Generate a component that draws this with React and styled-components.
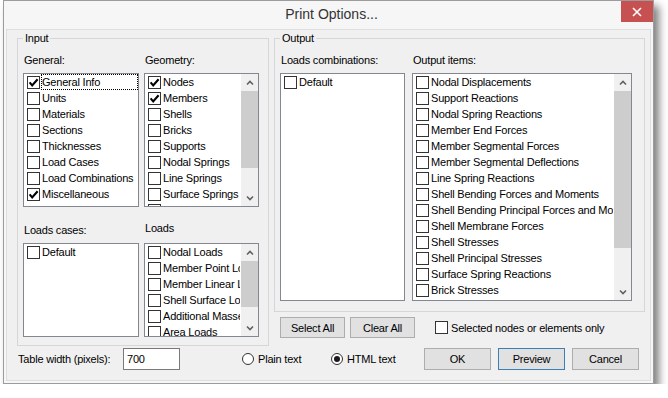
import React from "react";
import styled, { createGlobalStyle } from "styled-components";

const GlobalStyle = createGlobalStyle`
  * { box-sizing: border-box; }
  body {
    margin: 0;
    background: #fff;
    font-family: "Liberation Sans", Arial, sans-serif;
  }
`;

const general = [
  { name: "General Info", checked: true, focused: true },
  { name: "Units" },
  { name: "Materials" },
  { name: "Sections" },
  { name: "Thicknesses" },
  { name: "Load Cases" },
  { name: "Load Combinations" },
  { name: "Miscellaneous", checked: true },
];

const geometry = [
  { name: "Nodes", checked: true },
  { name: "Members", checked: true },
  { name: "Shells" },
  { name: "Bricks" },
  { name: "Supports" },
  { name: "Nodal Springs" },
  { name: "Line Springs" },
  { name: "Surface Springs" },
  { name: "Surface Supports" },
];

const loads = [
  { name: "Nodal Loads" },
  { name: "Member Point Loads" },
  { name: "Member Linear Loads" },
  { name: "Shell Surface Loads" },
  { name: "Additional Masses" },
  { name: "Area Loads" },
];

const outputItems = [
  "Nodal Displacements",
  "Support Reactions",
  "Nodal Spring Reactions",
  "Member End Forces",
  "Member Segmental Forces",
  "Member Segmental Deflections",
  "Line Spring Reactions",
  "Shell Bending Forces and Moments",
  "Shell Bending Principal Forces and Moments",
  "Shell Membrane Forces",
  "Shell Stresses",
  "Shell Principal Stresses",
  "Surface Spring Reactions",
  "Brick Stresses",
  "Brick Principal Stresses",
].map((name) => ({ name }));

const CheckMark = () => (
  <svg width="11" height="11" viewBox="0 0 11 11">
    <path d="M1.6 5.4 L4.2 8.4 L9.6 2.2" fill="none" stroke="#000" strokeWidth="2.1" />
  </svg>
);

const Chevron = ({ down }) => (
  <svg width="8" height="6" viewBox="0 0 8 6">
    <path
      d={down ? "M1 1.5 L4 4.5 L7 1.5" : "M1 4.5 L4 1.5 L7 4.5"}
      fill="none"
      stroke="#606060"
      strokeWidth="1.6"
    />
  </svg>
);

const CheckBox = ({ checked }) => <Box>{checked && <CheckMark />}</Box>;

const ListBox = ({ items, height, thumb }) => (
  <List $h={height}>
    <Items>
      {items.map((it) => (
        <Row key={it.name}>
          <CheckBox checked={it.checked} />
          <ItemText $focused={it.focused}>{it.name}</ItemText>
        </Row>
      ))}
    </Items>
    {thumb && (
      <ScrollBar>
        <ArrowBtn>
          <Chevron />
        </ArrowBtn>
        <Track>
          <Thumb $h={thumb} />
        </Track>
        <ArrowBtn>
          <Chevron down />
        </ArrowBtn>
      </ScrollBar>
    )}
  </List>
);

const App = () => (
  <Page>
    <GlobalStyle />
    <Window>
      <TitleBar>
        <Title>Print Options...</Title>
        <CloseButton>
          <svg width="10" height="10" viewBox="0 0 10 10">
            <path d="M1 1 L9 9 M9 1 L1 9" stroke="#fff" strokeWidth="1.6" />
          </svg>
        </CloseButton>
      </TitleBar>
      <Client>
        <TopArea>
          <GroupBox $pr={8} $pb={8}>
            <Legend>Input</Legend>
            <InputGrid>
              <Section>
                <FieldLabel>General:</FieldLabel>
                <ListBox items={general} height={134} />
              </Section>
              <Section>
                <FieldLabel>Geometry:</FieldLabel>
                <ListBox items={geometry} height={134} thumb={77} />
              </Section>
              <Section>
                <FieldLabel>Loads cases:</FieldLabel>
                <ListBox items={[{ name: "Default" }]} height={94} />
              </Section>
              <Section>
                <FieldLabel $up>Loads</FieldLabel>
                <ListBox items={loads} height={94} thumb={46} />
              </Section>
            </InputGrid>
          </GroupBox>
          <RightColumn>
            <GroupBox $pr={12} $pb={10}>
              <Legend>Output</Legend>
              <OutputGrid>
                <Section>
                  <FieldLabel>Loads combinations:</FieldLabel>
                  <ListBox items={[{ name: "Default" }]} height={228} />
                </Section>
                <Section>
                  <FieldLabel>Output items:</FieldLabel>
                  <ListBox items={outputItems} height={228} thumb={157} />
                </Section>
              </OutputGrid>
            </GroupBox>
            <ActionRow>
              <Button $w={65} $h={21}>Select All</Button>
              <Button $w={65} $h={21}>Clear All</Button>
              <Option $ml={15}>
                <CheckBox />
                <span>Selected nodes or elements only</span>
              </Option>
            </ActionRow>
          </RightColumn>
        </TopArea>
        <BottomRow>
          <TableLabel>Table width (pixels):</TableLabel>
          <TextInput defaultValue="700" />
          <Option $ml={62} $w={89}>
            <Radio />
            <span>Plain text</span>
          </Option>
          <Option $w={93}>
            <Radio $checked />
            <span>HTML text</span>
          </Option>
          <ButtonGroup>
            <Button $w={67} $h={22}>OK</Button>
            <Button $w={67} $h={22} $default>Preview</Button>
            <Button $w={67} $h={22}>Cancel</Button>
          </ButtonGroup>
        </BottomRow>
      </Client>
    </Window>
  </Page>
);

const Page = styled.div`
  padding-left: 3px;
`;

const Window = styled.div`
  width: 651px;
  height: 384px;
  border: 1px solid #9c9c9c;
  background: #f6f6f6;
  box-shadow: 5px 6px 8px rgba(0, 0, 0, 0.5);
  display: flex;
  flex-direction: column;
`;

const TitleBar = styled.div`
  height: 28px;
  display: flex;
  align-items: flex-start;
`;

const Title = styled.div`
  flex: 1;
  padding-left: 38px;
  text-align: center;
  line-height: 27px;
  font-size: 14px;
  color: #333;
`;

const CloseButton = styled.div`
  width: 32px;
  height: 21px;
  background: #c75050;
  display: flex;
  align-items: center;
  justify-content: center;
`;

const Client = styled.div`
  flex: 1;
  margin: 0 2px 2px;
  border: 1px solid #dedede;
  background: #f0f0f0;
  padding: 2px 0 0 10px;
  font-size: 11px;
  letter-spacing: -0.2px;
  color: #000;
`;

const TopArea = styled.div`
  display: grid;
  grid-template-columns: 252px 371px;
  column-gap: 5px;
  align-items: start;
`;

const RightColumn = styled.div`
  display: flex;
  flex-direction: column;
`;

const GroupBox = styled.fieldset`
  margin: 0;
  min-width: 0;
  border: 1px solid #d6d6d6;
  padding: 9px ${(p) => p.$pr}px ${(p) => p.$pb}px 5px;
`;

const Legend = styled.legend`
  padding: 0 2px;
  line-height: 13px;
  font-size: 11px;
`;

const InputGrid = styled.div`
  display: grid;
  grid-template-columns: 116px 115px;
  column-gap: 5px;
  row-gap: 17px;
`;

const OutputGrid = styled.div`
  display: grid;
  grid-template-columns: 125px 220px;
  column-gap: 7px;
`;

const Section = styled.div`
  display: flex;
  flex-direction: column;
  gap: 6px;
`;

const FieldLabel = styled.div`
  line-height: 13px;
  white-space: nowrap;
  padding-left: 1px;
  margin-top: ${(p) => (p.$up ? "-2px" : "0")};
  margin-bottom: ${(p) => (p.$up ? "2px" : "0")};
`;

const List = styled.div`
  height: ${(p) => p.$h}px;
  border: 1px solid #828790;
  background: #fff;
  display: flex;
  overflow: hidden;
`;

const Items = styled.div`
  flex: 1;
  min-width: 0;
  overflow: hidden;
`;

const Row = styled.div`
  height: 16px;
  display: flex;
  align-items: center;
  padding-left: 3px;
  white-space: nowrap;
`;

const Box = styled.span`
  width: 13px;
  height: 13px;
  flex-shrink: 0;
  border: 1px solid #333;
  background: #fff;
  display: flex;
  align-items: center;
  justify-content: center;
`;

const ItemText = styled.span`
  flex: 1;
  min-width: 0;
  height: 16px;
  margin-left: 1px;
  line-height: 14px;
  overflow: hidden;
  border: 1px ${(p) => (p.$focused ? "dotted #000" : "solid transparent")};
`;

const ScrollBar = styled.div`
  width: 17px;
  flex-shrink: 0;
  display: flex;
  flex-direction: column;
  background: #f0f0f0;
`;

const ArrowBtn = styled.div`
  height: 17px;
  flex-shrink: 0;
  display: flex;
  align-items: center;
  justify-content: center;
`;

const Track = styled.div`
  flex: 1;
`;

const Thumb = styled.div`
  height: ${(p) => p.$h}px;
  background: #cdcdcd;
`;

const ActionRow = styled.div`
  display: flex;
  align-items: center;
  gap: 5px;
  margin-top: 5px;
  padding-left: 6px;
`;

const Button = styled.button`
  width: ${(p) => p.$w}px;
  height: ${(p) => p.$h}px;
  padding: 0;
  background: #e1e1e1;
  border: 1px solid ${(p) => (p.$default ? "#3c7fb1" : "#adadad")};
  font-family: inherit;
  font-size: 11px;
  letter-spacing: -0.2px;
  color: #000;
`;

const Option = styled.label`
  display: flex;
  align-items: center;
  gap: 3px;
  white-space: nowrap;
  margin-left: ${(p) => p.$ml || 0}px;
  width: ${(p) => (p.$w ? `${p.$w}px` : "auto")};
`;

const Radio = styled.span`
  width: 12px;
  height: 12px;
  flex-shrink: 0;
  margin-right: 1px;
  border: 1px solid #333;
  border-radius: 50%;
  background: #fff;
  display: flex;
  align-items: center;
  justify-content: center;

  &::after {
    content: "";
    width: 6px;
    height: 6px;
    border-radius: 50%;
    background: ${(p) => (p.$checked ? "#1a1a1a" : "transparent")};
  }
`;

const BottomRow = styled.div`
  display: flex;
  align-items: center;
  height: 22px;
  margin-top: 2px;
  padding-left: 1px;
`;

const TableLabel = styled.span`
  width: 105px;
  white-space: nowrap;
`;

const TextInput = styled.input`
  width: 57px;
  height: 22px;
  border: 1px solid #7a7a7a;
  background: #fff;
  padding: 0 3px;
  font-family: inherit;
  font-size: 11px;
  letter-spacing: -0.2px;
  outline: none;
`;

const ButtonGroup = styled.div`
  display: flex;
  gap: 7px;
`;

export default App;
